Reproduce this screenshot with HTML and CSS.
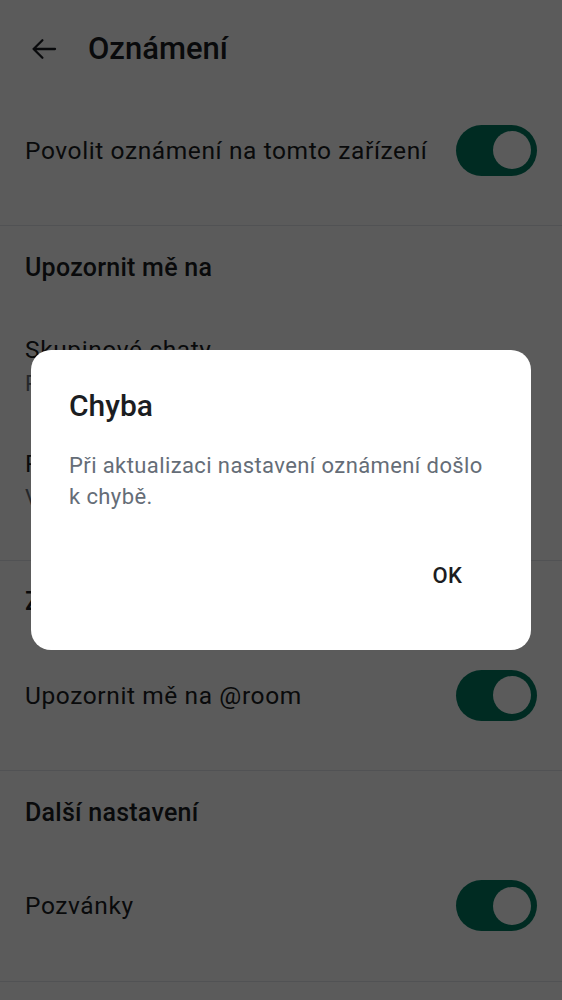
FILE: index.html
```html
<!DOCTYPE html>
<html lang="cs">
<head>
<meta charset="utf-8">
<title>Oznámení</title>
<link rel="stylesheet" href="styles.css">
</head>
<body>
<div class="screen">
  <header class="topbar">
    <svg class="back" width="26" height="24" viewBox="0 0 26 24" aria-hidden="true">
      <path d="M24 12H2.6M11.4 3.2L2.6 12l8.8 8.8" fill="none" stroke="#1b1d22" stroke-width="2.3" stroke-linecap="round" stroke-linejoin="round"/>
    </svg>
    <h1 class="title">Oznámení</h1>
  </header>

  <section class="section">
    <div class="switch-row">
      <span class="label">Povolit oznámení na tomto zařízení</span>
      <span class="switch"><span class="thumb"></span></span>
    </div>
  </section>

  <section class="section section-tall">
    <div class="sec-title">Upozornit mě na</div>
    <div class="item">
      <div class="label">Skupinové chaty</div>
      <div class="sub">Pouze zmínky a klíčová slova</div>
    </div>
    <div class="item">
      <div class="label">Přímé chaty</div>
      <div class="sub">Všechny zprávy</div>
    </div>
  </section>

  <section class="section">
    <div class="sec-title">Zmínky</div>
    <div class="switch-row">
      <span class="label">Upozornit mě na @room</span>
      <span class="switch"><span class="thumb"></span></span>
    </div>
  </section>

  <section class="section">
    <div class="sec-title">Další nastavení</div>
    <div class="switch-row">
      <span class="label">Pozvánky</span>
      <span class="switch"><span class="thumb"></span></span>
    </div>
  </section>
</div>

<div class="scrim"></div>

<div class="dialog" role="alertdialog">
  <h2 class="dlg-title">Chyba</h2>
  <p class="dlg-text">Při aktualizaci nastavení oznámení došlo k chybě.</p>
  <div class="dlg-actions">
    <button class="dlg-btn" type="button">OK</button>
  </div>
</div>
</body>
</html>
```

FILE: styles.css
```css
* { box-sizing: border-box; }

html, body {
  margin: 0;
  padding: 0;
  background: #ffffff;
  font-family: Roboto, "Noto Sans", "DejaVu Sans", sans-serif;
  color: #1b1d22;
  overflow: hidden;
}

.screen {
  width: 562px;
}

.topbar {
  height: 97px;
  display: flex;
  align-items: center;
  padding-left: 31px;
}

.back {
  display: block;
  margin-top: 1px;
}

.title {
  margin: 0 0 0 31px;
  font-size: 31px;
  font-weight: 500;
  line-height: 38px;
}

.section {
  padding-bottom: 22px;
  border-bottom: 1px solid #e3e6ea;
}

.section-tall {
  padding-bottom: 24px;
}

.switch-row {
  height: 106px;
  display: flex;
  align-items: center;
  justify-content: space-between;
  padding: 0 25px;
}

.label {
  font-size: 24.5px;
  letter-spacing: 0.6px;
  line-height: 37px;
}

.sec-title {
  padding: 25.5px 25px 24px;
  font-size: 25px;
  font-weight: 500;
  line-height: 32px;
  letter-spacing: 0.25px;
}

.item {
  padding: 23px 25px;
  display: flex;
  flex-direction: column;
}

.sub {
  font-size: 22px;
  line-height: 31px;
  letter-spacing: 0.4px;
  color: #656d77;
}

.switch {
  flex: none;
  width: 81px;
  height: 51px;
  border-radius: 26px;
  background: #007a61;
  display: flex;
  align-items: center;
  justify-content: flex-end;
  padding-right: 6.5px;
}

.thumb {
  width: 38px;
  height: 38px;
  border-radius: 50%;
  background: #ffffff;
}

.scrim {
  position: fixed;
  inset: 0;
  background: rgba(0, 0, 0, 0.643);
}

.dialog {
  position: fixed;
  left: 31px;
  top: 350px;
  width: 500px;
  height: 300px;
  background: #ffffff;
  border-radius: 20px;
  padding: 37px 0 0 38px;
  display: flex;
  flex-direction: column;
}

.dlg-title {
  margin: 0;
  font-size: 30px;
  font-weight: 500;
  line-height: 38px;
  color: #1b1d22;
}

.dlg-text {
  margin: 25px 0 0;
  padding-right: 40px;
  font-size: 22px;
  line-height: 31px;
  letter-spacing: 0.4px;
  color: #656d77;
}

.dlg-actions {
  margin-top: 32px;
  display: flex;
  justify-content: flex-end;
  padding-right: 44px;
}

.dlg-btn {
  height: 62px;
  padding: 0 25px;
  border: 0;
  background: transparent;
  font-family: Roboto, "Noto Sans", sans-serif;
  font-size: 22px;
  font-weight: 500;
  letter-spacing: 0.2px;
  color: #1b1d22;
}
```
